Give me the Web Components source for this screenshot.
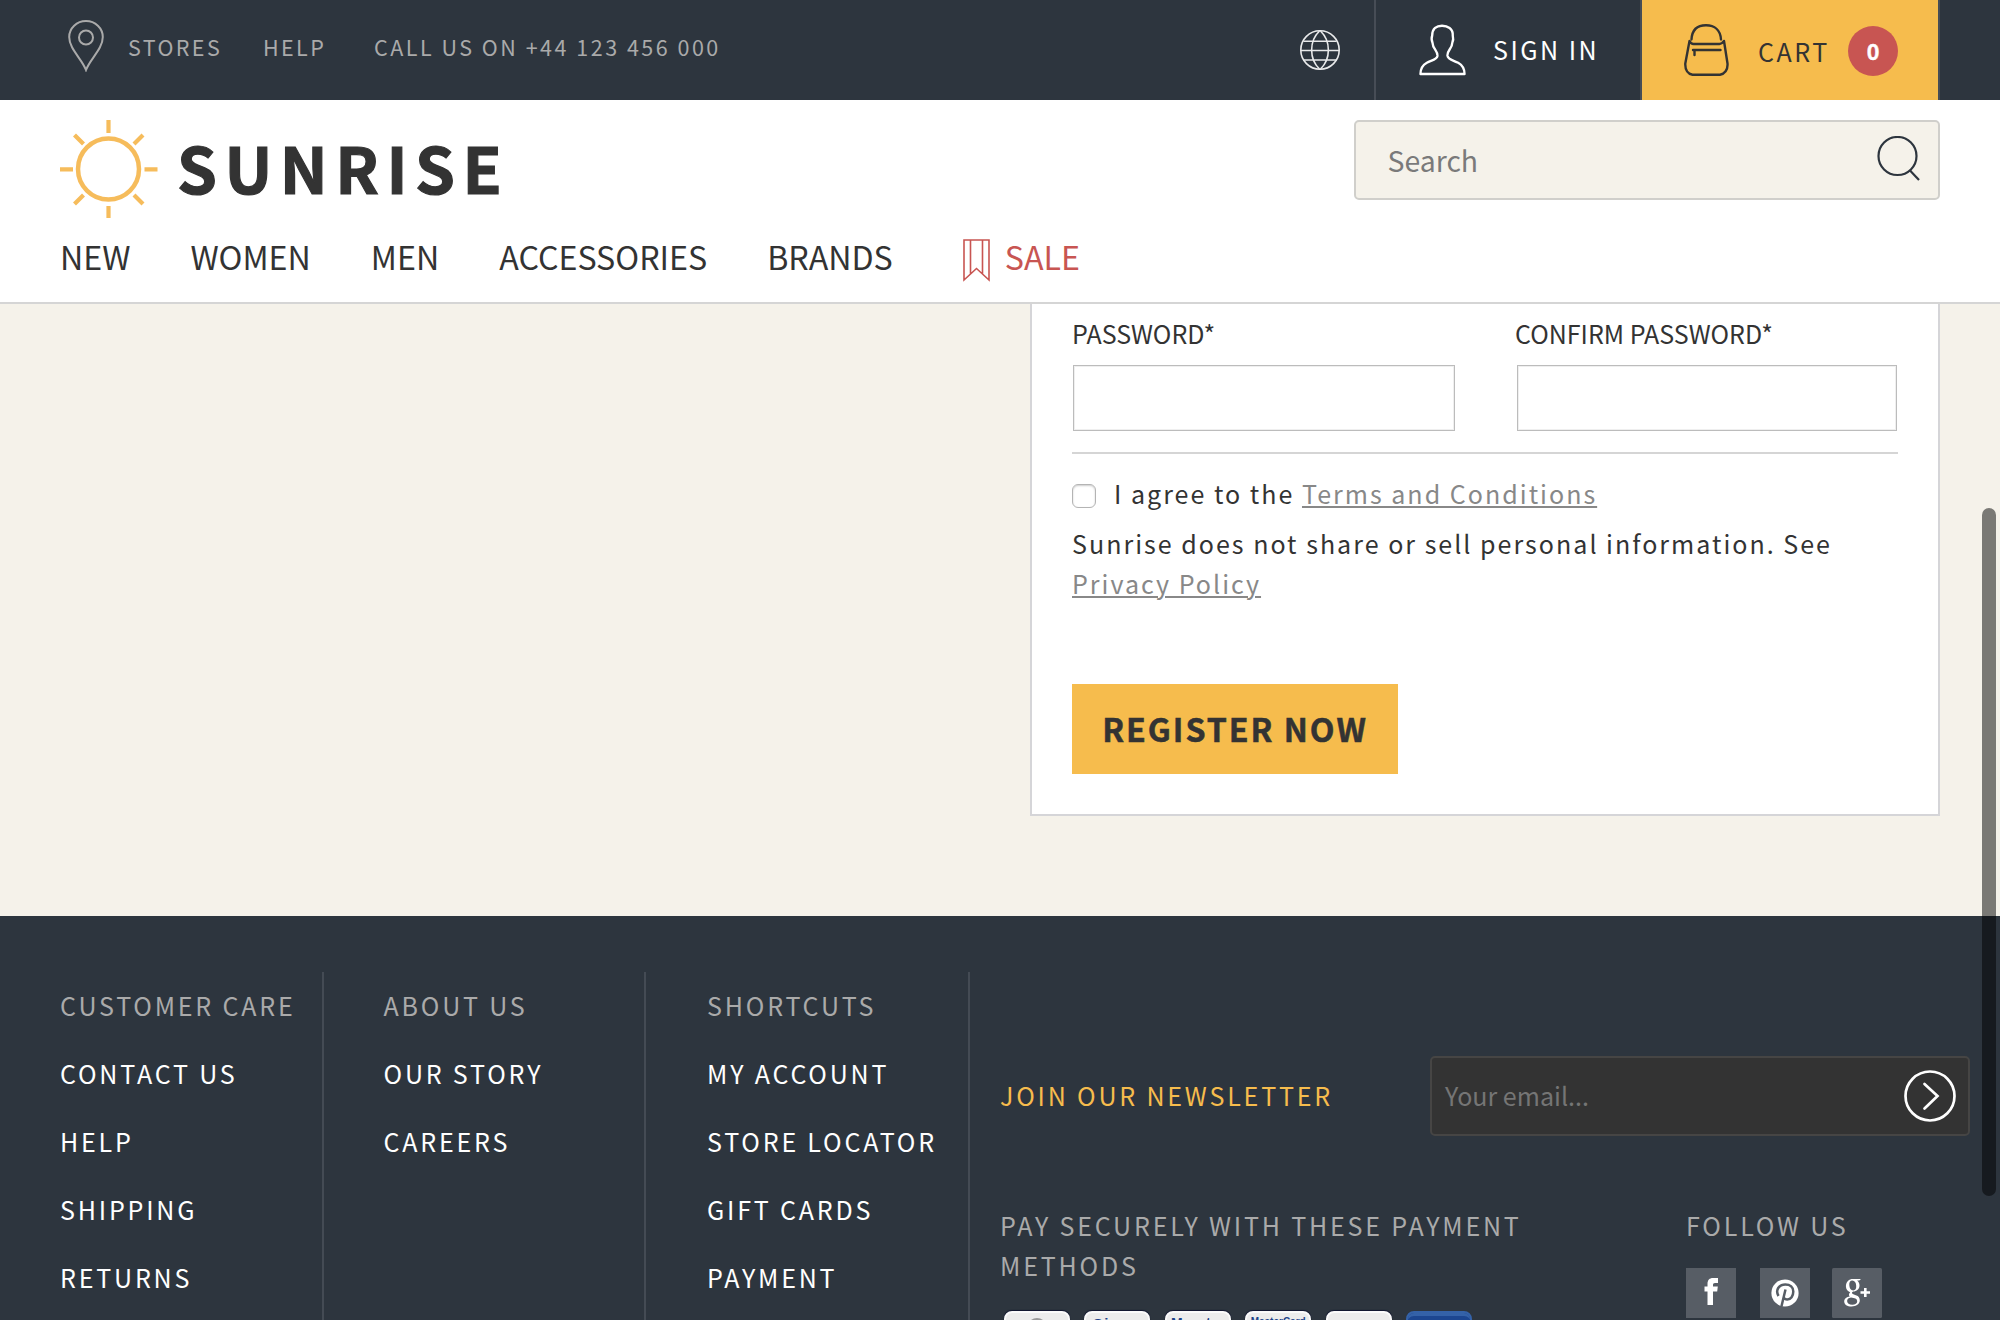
<!DOCTYPE html>
<html lang="en">
<head>
<meta charset="utf-8">
<title>Sunrise</title>
<style>
html,body{margin:0;height:1320px;overflow:hidden}
body{font-family:"Noto Sans CJK SC","Open Sans",sans-serif;color:#333;background:#f5f2ea;position:relative}
</style>
</head>
<body>
<sunrise-page></sunrise-page>
<script>
function define(name, css, html){
  customElements.define(name, class extends HTMLElement{
    constructor(){
      super();
      const attrs = k => this.getAttribute(k) || '';
      this.attachShadow({mode:'open'}).innerHTML =
        '<style>*{box-sizing:border-box}svg{display:block;flex:none}' + css + '</style>' +
        (typeof html === 'function' ? html(attrs) : html);
    }
  });
}

define('top-bar', `
:host{display:flex;height:100px;background:#2d353e;color:#aaa;padding:0 60px 0 68px;font-size:21.5px;letter-spacing:2.4px;line-height:30px;white-space:nowrap}
.left{display:flex;flex:1;padding-top:20px}
.left span{padding-top:12px}
.pin{margin-right:24px}.stores{width:135px}.help{width:111px}.call{letter-spacing:2.500px}
.globe{width:74px;padding-top:30px}
.cell{display:flex;border-left:2px solid #474d56;font-size:25.05px;letter-spacing:2.500px;color:#fff}
.sign{width:266px;padding-left:43px}
.sign svg{margin:24px 27px 0 0}.sign span{padding-top:34px}
.cart{width:300px;background:#f6bc4d;background-clip:padding-box;border-right:2px solid #474d56;color:#333;padding-left:42px}
.cart svg{margin:24px 29px 0 0}.cart span{padding-top:36px;width:90px}
.badge{width:50px;height:50px;border-radius:50%;background:#c85552;color:#fff;font-weight:700;font-size:21.5px;letter-spacing:0;text-align:center;line-height:50px;margin-top:26px;-webkit-text-stroke:.4px #fff}
`, `
<div class="left">
<svg class="pin" width="36" height="52" viewBox="0 0 36 52" fill="none" stroke="#aaa" stroke-width="2"><path d="M18 50C14 39 1.200 29 1.200 17a16.800 16 0 0 1 33.600 0C34.800 29 22 39 18 50z"/><circle cx="18" cy="17.500" r="7"/></svg>
<span class="stores">STORES</span><span class="help">HELP</span><span class="call">CALL US ON +44 123 456 000</span></div>
<div class="globe"><svg width="40" height="40" viewBox="0 0 40 40" fill="none" stroke="#e9eaeb" stroke-width="1.600"><circle cx="20" cy="20" r="19.200"/><path d="M.8 20.500h38.400M3.500 11.300h33M3.500 30h33M19.500 1C9 11 9 29 19.500 39M20.500 1C31 11 31 29 20.500 39"/></svg></div>
<div class="cell sign"><svg width="47" height="52" viewBox="0 0 48 52" fill="none" stroke="#fff" stroke-width="2.400" stroke-linejoin="round"><path d="M1.500 50.500h45c0-6-2-9-6.500-11.500-5-2.500-10.500-3-11-7.500-.4-5 5-7 5-13 1.500-3 1-5 .5-7C35 4 29 1.200 23.500 1.200S13.500 4 13.500 11c-.8 2-.8 5 .4 8 0 5.500 5.500 8 5 13-.6 4-6 4.500-10.900 7-4.500 2.500-6.500 5.500-6.500 11.500z"/></svg><span>SIGN IN</span></div>
<div class="cell cart"><svg width="45" height="52" viewBox="0 0 45 52" fill="none" stroke="#333" stroke-width="2.400" stroke-linejoin="round" stroke-linecap="round"><path d="M7.500 15.500C8 6 13.500 1.200 22 1.200S36.500 6 37 15.500M5.500 17L1.300 39.500C1 46 4 50 8.500 50.700h27.500c4.500-.7 8-4.700 7.500-11.200L40 17c-1.500 2-2.500 3-4.500 3h-26c-2 0-3-1-4-3zM9 26h27.500M10.500 26v5"/></svg><span>CART</span><div class="badge">0</div></div>
`);

define('nav-item', `:host{display:block}`, `<slot></slot>`);

define('site-header', `
:host{display:block;height:204px;background:#fff;border-bottom:2px solid #d5d5d5;padding:20px 60px 0}
.row{display:flex;justify-content:space-between;height:98px}
.brand{display:flex;font-weight:700;font-size:64px;letter-spacing:7.500px;line-height:98px}
.brand span{padding-left:19px;margin-top:-3px;-webkit-text-stroke:1.200px #333}
.search{width:586px;height:80px;border:2px solid #d0cfcb;border-radius:5px;background:#f5f2ea;display:flex;justify-content:space-between;padding:0 18.500px 0 31.500px;font-size:28.4px;line-height:76px;color:#7a7a7a}
.search svg{margin-top:14px}
nav{display:flex;gap:60px;font-size:32.2px;line-height:50px;padding-top:13px;white-space:nowrap}
.sale{color:#c85552}
.sale div{display:flex;gap:15px;margin-left:10px}
.sale svg{margin-top:8px}
`, `
<div class="row"><div class="brand"><svg width="98" height="98" viewBox="0 0 98 98" fill="none" stroke="#f6bc5b" stroke-width="4.500"><circle cx="48.500" cy="49" r="30.500"/><path d="M48.500 0v13M48.500 86v12M0 49.300h13M84.500 49.300h13M14.500 15l9 9M83 15l-9 9M14.500 84l9-9M83 84l-9-9" stroke-width="4.200"/></svg><span>SUNRISE</span></div>
<div class="search"><span>Search</span><svg width="43" height="46" viewBox="0 0 43 46" fill="none" stroke="#2d353e" stroke-width="2.200"><circle cx="20.500" cy="20" r="19"/><path d="M33 34.500L42 44"/></svg></div></div>
<nav><nav-item>NEW</nav-item><nav-item>WOMEN</nav-item><nav-item>MEN</nav-item><nav-item>ACCESSORIES</nav-item><nav-item>BRANDS</nav-item><nav-item class="sale"><div><svg width="27" height="43" viewBox="0 0 27 43" fill="none" stroke="#c85552" stroke-width="1.600"><path d="M1 1h25v40L13.500 29.500 1 41zM7.500 1v33.500M19.500 1v33.500"/></svg>SALE</div></nav-item></nav>
`);

define('form-field', `:host{display:block}
label{display:block;font-size:25px;line-height:40px;margin-bottom:12px}
:host(:last-child) label{margin-left:-1px}
.box{height:66px;margin:0 1px;border:1px solid #bcbcbc;background:#fff;box-shadow:inset 0 0 0 1px #efefef}`,
 a => `<label>${a('label')}</label><div class="box"></div>`);

define('register-card', `
:host{display:block;width:910px;height:512px;margin-left:auto;background:#fff;border:2px solid #d5d5d8;border-top:0;padding:9px 40px 0;font-size:25.05px;letter-spacing:2px;line-height:40px}
.fields{display:grid;grid-template-columns:384px 382px;justify-content:space-between;letter-spacing:0;border-bottom:2px solid #d5d5d5;height:141px}
.agree{display:flex;margin-top:19px;height:40px;white-space:pre}
.check{width:24px;height:24px;margin:11px 18px 0 0;border:1px solid #b4b4b4;border-radius:6px;background:#fff;box-shadow:inset 0 1px 2px #ccc}
a{color:#888;text-decoration:underline;text-decoration-thickness:2px;text-underline-offset:2px}
p{margin:10px 0 0;width:826px}
button{display:block;margin-top:81px;width:326px;height:90px;padding:0 0 3px;border:0;background:#f6bc4d;color:#333;font:700 32.2px/86px "Noto Sans CJK SC",sans-serif;letter-spacing:1.950px;text-align:center;-webkit-text-stroke:.5px #333}
`, `
<div class="fields"><form-field label="PASSWORD*"></form-field><form-field label="CONFIRM PASSWORD*"></form-field></div>
<div class="agree"><div class="check"></div><span>I agree to the <a>Terms and Conditions</a></span></div>
<p>Sunrise does not share or sell personal information. See <a>Privacy Policy</a></p>
<button>REGISTER NOW</button>
`);

define('link-column', `:host{display:block;height:348px;border-right:2px solid #444b54;color:#fff;line-height:40px;white-space:nowrap}
div{margin-top:28px}.h{color:#aaa;margin-top:13px}`,
 a => `<div class="h">${a('heading')}</div>` + a('links').split(',').map(t => `<div>${t}</div>`).join(''));

define('pay-card', `:host{display:block;width:66px;height:42px;border-radius:8px;background:#ececec;border:2px solid #fafafa;box-shadow:0 -1px 1px #101530;font:700 15px/15px "Liberation Sans",sans-serif;letter-spacing:0;color:#1d4389;text-align:center;overflow:hidden;padding-top:3px;flex:none}
:host([blue]){background:#1c4690;border-color:#3462a8;box-shadow:inset 0 4px 0 -1px #3462a8}
svg{margin:1px auto 0}`, `<slot></slot>`);

define('site-footer', `
:host{display:flex;height:404px;background:#2d353e;padding:56px 0 0 60px;font-size:25.05px;letter-spacing:2.800px;line-height:40px;color:#aaa;overflow:hidden}
link-column{flex:none}
.c1{width:264px}.c2{width:322px;padding-left:59.500px}.c3{width:324px;padding-left:61px}
.right{flex:1;padding:84px 30px 0 30px}
.news{display:flex;justify-content:space-between;color:#f6bc4d;line-height:78px;height:80px;white-space:nowrap}
.email{width:540px;height:80px;border:2px solid #464544;border-radius:5px;background:#333;color:#757575;letter-spacing:0;line-height:74px;display:flex;justify-content:space-between;padding:0 12px 0 13px}
.email svg{margin-top:12px}
.low{display:flex;padding-top:69px}
.pay{width:686px}.cards{display:flex;gap:14.400px;padding:26px 0 0 4px}
.pay p{margin:0;width:580px}
.social{display:flex;padding-top:23px}
.social svg+svg{margin-left:24px}.social svg:last-child{margin-left:22px}
`, `
<link-column class="c1" heading="CUSTOMER CARE" links="CONTACT US,HELP,SHIPPING,RETURNS"></link-column>
<link-column class="c2" heading="ABOUT US" links="OUR STORY,CAREERS"></link-column>
<link-column class="c3" heading="SHORTCUTS" links="MY ACCOUNT,STORE LOCATOR,GIFT CARDS,PAYMENT"></link-column>
<div class="right">
<div class="news"><span>JOIN OUR NEWSLETTER</span><div class="email"><span>Your email...</span><svg width="52" height="52" viewBox="0 0 52 52" fill="none" stroke="#fff" stroke-width="2.700"><circle cx="26" cy="26" r="24.500"/><path d="M20.500 14L33.500 26L20.500 38.500" stroke-linecap="round"/></svg></div></div>
<div class="low"><div class="pay"><p>PAY SECURELY WITH THESE PAYMENT METHODS</p>
<div class="cards"><pay-card><svg width="20" height="20" viewBox="0 0 20 20" style="margin:2px auto 0"><circle cx="10" cy="10" r="10" fill="#999"/></svg></pay-card><pay-card style="letter-spacing:1px">Cirrus</pay-card><pay-card style="font-size:14px">Maestro</pay-card><pay-card style="font-size:10px;line-height:11px">MasterCard</pay-card><pay-card></pay-card><pay-card blue></pay-card></div></div>
<div><div>FOLLOW US</div><div class="social">
<svg width="50" height="50" viewBox="0 0 50 50"><path fill="#575d65" d="M0 0h50v50H0z"/><path fill="#fff" d="M21.500 37V23.500H18.500V18.500h3v-2.500c0-4 2-6 5.500-6h5v5h-3c-1.500 0-2 .7-2 2v1.500h4.800l-.6 5H27V37z"/></svg>
<svg width="50" height="50" viewBox="0 0 50 50"><path fill="#575d65" d="M0 0h50v50H0z"/><circle cx="25" cy="25" r="13.600" fill="#fff"/><path d="M18.500 28c-3.500-6 .5-11.500 6.800-11.500 5 0 8 3 8 7 0 4.500-2.500 8-6 8-2 0-3.500-1.200-3.500-2.500M25.500 21.500L21.300 39" fill="none" stroke="#575d65" stroke-width="2.500"/></svg>
<svg width="50" height="50" viewBox="0 0 50 50"><rect fill="#575d65" width="50" height="50" rx="1.500"/><path fill="#fff" fill-rule="evenodd" d="M21 11h8l-1.700 1.500h-2.200c1.600 1.200 2.400 3 2.400 5 0 3.600-2.900 6-6.300 6-1.300.6-1.500 1.500-1 2.100 1.300 1.700 7.600 1.200 7.600 6.700 0 3.900-3.700 6.200-8.300 6.200-4.300 0-7.300-1.900-7.300-5 0-3 2.600-4.600 5.600-5-1-.8-1.400-2.600.4-4.300-2.700-.8-4.300-2.800-4.300-5.900 0-4.600 3.100-7.300 7.100-7.300zM20.300 12.500c-2.200 0-3.200 1.800-3 4.500.2 3.200 1.500 5.400 3.900 5.400 2.200 0 3.200-1.900 3-4.700-.2-3-1.500-5.200-3.900-5.200zM19 29.500c-2.400.3-3.900 1.500-3.900 3.600 0 2.200 2.100 3.700 5.100 3.700 3.200 0 5-1.300 5-3.500 0-2.700-2.700-3.400-6.200-3.800z"/><path d="M28.500 24.500h9.500M33.300 20v9" stroke="#fff" stroke-width="2.600"/></svg>
</div></div></div></div>
`);

define('scroll-thumb', `:host{position:absolute;left:1982px;top:508px;width:14px;height:688px;border-radius:7px;background:rgba(0,0,0,.5)}`, ``);

define('sunrise-page', `:host{display:block;width:2000px;height:1320px;overflow:hidden}
main{height:612px;padding-right:60px}`,
`<top-bar></top-bar><site-header></site-header><main><register-card></register-card></main><site-footer></site-footer><scroll-thumb></scroll-thumb>`);
</script>
</body>
</html>
